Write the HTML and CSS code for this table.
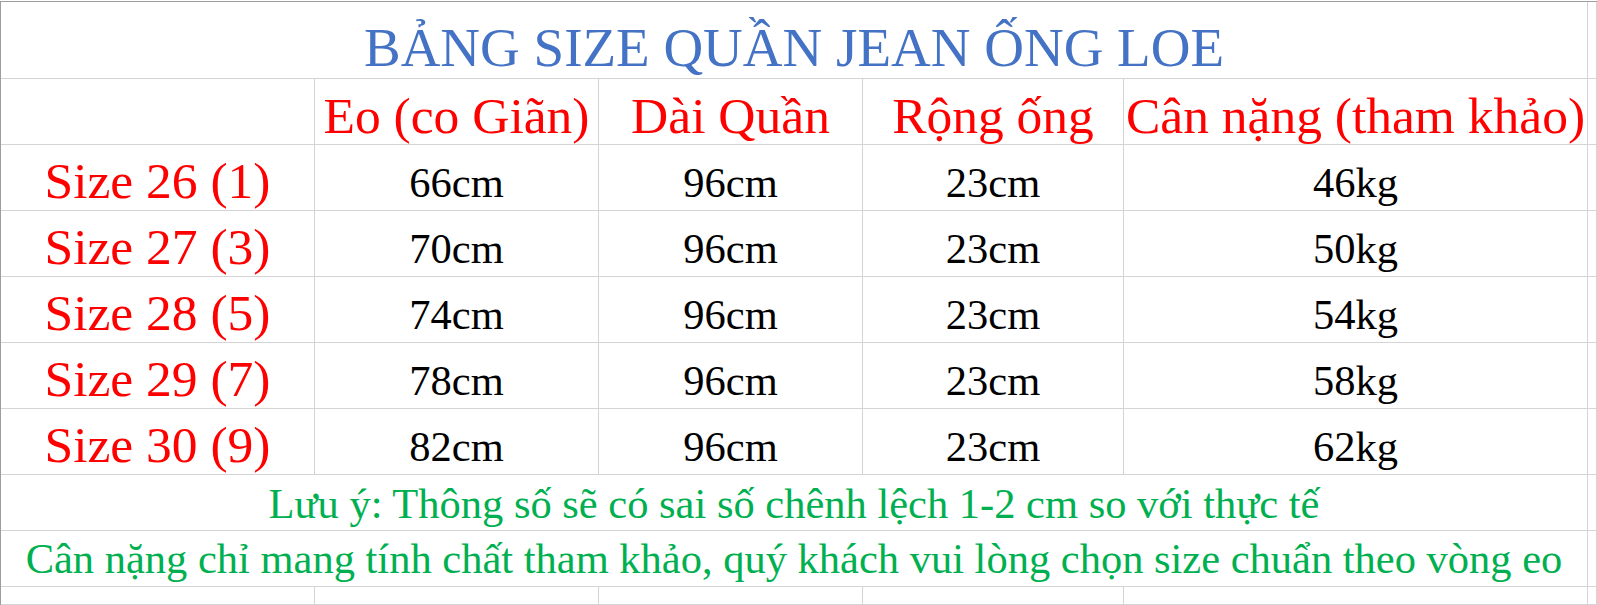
FILE: index.html
```html
<!DOCTYPE html>
<html lang="vi">
<head>
<meta charset="utf-8">
<title>Bảng size quần jean ống loe</title>
<link rel="stylesheet" href="styles.css">
</head>
<body>
<div class="sheet">
  <div class="c span5 title"><span>BẢNG SIZE QUẦN JEAN ỐNG LOE</span></div>
  <div class="c"></div>

  <div class="c"></div>
  <div class="c head"><span>Eo (co Giãn)</span></div>
  <div class="c head"><span>Dài Quần</span></div>
  <div class="c head"><span>Rộng ống</span></div>
  <div class="c head"><span>Cân nặng (tham khảo)</span></div>
  <div class="c"></div>

  <div class="c label"><span>Size 26 (1)</span></div>
  <div class="c data"><span>66cm</span></div>
  <div class="c data"><span>96cm</span></div>
  <div class="c data"><span>23cm</span></div>
  <div class="c data"><span>46kg</span></div>
  <div class="c"></div>

  <div class="c label"><span>Size 27 (3)</span></div>
  <div class="c data"><span>70cm</span></div>
  <div class="c data"><span>96cm</span></div>
  <div class="c data"><span>23cm</span></div>
  <div class="c data"><span>50kg</span></div>
  <div class="c"></div>

  <div class="c label"><span>Size 28 (5)</span></div>
  <div class="c data"><span>74cm</span></div>
  <div class="c data"><span>96cm</span></div>
  <div class="c data"><span>23cm</span></div>
  <div class="c data"><span>54kg</span></div>
  <div class="c"></div>

  <div class="c label"><span>Size 29 (7)</span></div>
  <div class="c data"><span>78cm</span></div>
  <div class="c data"><span>96cm</span></div>
  <div class="c data"><span>23cm</span></div>
  <div class="c data"><span>58kg</span></div>
  <div class="c"></div>

  <div class="c label"><span>Size 30 (9)</span></div>
  <div class="c data"><span>82cm</span></div>
  <div class="c data"><span>96cm</span></div>
  <div class="c data"><span>23cm</span></div>
  <div class="c data"><span>62kg</span></div>
  <div class="c"></div>

  <div class="c span5 note note1"><span>Lưu ý: Thông số sẽ có sai số chênh lệch 1-2 cm so với thực tế</span></div>
  <div class="c"></div>

  <div class="c span5 note note2"><span>Cân nặng chỉ mang tính chất tham khảo, quý khách vui lòng chọn size chuẩn theo vòng eo</span></div>
  <div class="c"></div>

  <div class="c"></div>
  <div class="c"></div>
  <div class="c"></div>
  <div class="c"></div>
  <div class="c"></div>
  <div class="c"></div>
</div>
</body>
</html>
```

FILE: styles.css
```css
* {
  box-sizing: border-box;
}

html, body {
  margin: 0;
  padding: 0;
  background: #ffffff;
  overflow: hidden;
}

body {
  padding-top: 1px;
}

.sheet {
  width: 1597px;
  height: 604px;
  border-top: 1px solid #9e9e9e;
  border-left: 1px solid #9e9e9e;
  display: grid;
  grid-template-columns: 314px 284px 264px 261px 464px 1fr;
  grid-template-rows: 77px 66px repeat(5, 66px) 56px 56px 1fr;
  font-family: "Liberation Serif", "Times New Roman", serif;
  overflow: hidden;
}

.c {
  border-right: 1px solid #d4d4d4;
  border-bottom: 1px solid #d4d4d4;
  display: flex;
  align-items: flex-end;
  justify-content: center;
  white-space: nowrap;
  min-width: 0;
  line-height: 1;
}

.span5 {
  grid-column: span 5;
}

.title {
  color: #4472c4;
  font-size: 55px;
  padding-bottom: 3px;
}

.head {
  color: #ff0000;
  font-size: 51.5px;
  padding-bottom: 3px;
}

.label {
  color: #ff0000;
  font-size: 51.5px;
  padding-bottom: 4px;
}

.data {
  color: #000000;
  font-size: 42.5px;
  padding-bottom: 6px;
}

.note {
  color: #00b050;
  font-size: 42.5px;
}

.note1 {
  padding-bottom: 5px;
}

.note2 {
  padding-bottom: 6px;
}
```
